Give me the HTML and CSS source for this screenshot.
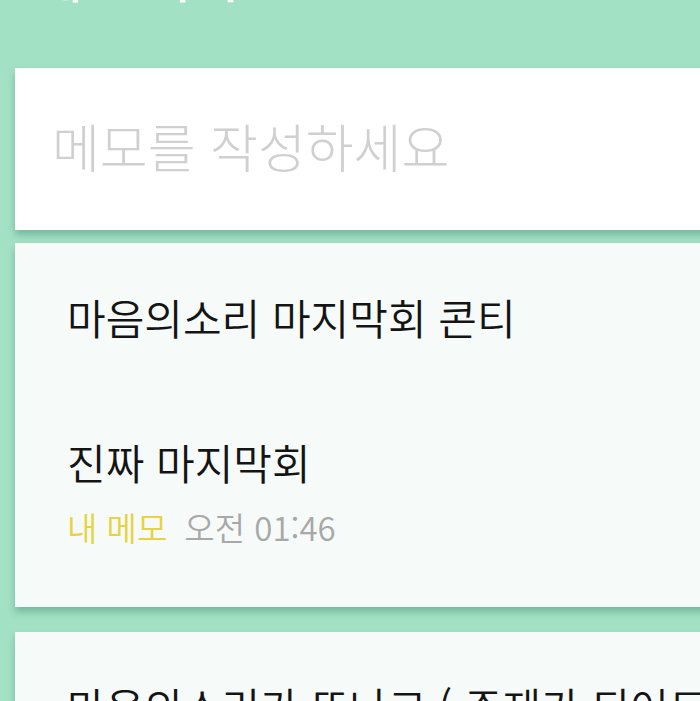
FILE: index.html
```html
<!DOCTYPE html>
<html lang="ko">
<head>
<meta charset="utf-8">
<link rel="stylesheet" href="styles.css">
</head>
<body>
<div class="page">
  <div class="header"><span class="title">메모 목록</span></div>
  <div class="card input-card">
    <div class="placeholder">메모를 작성하세요</div>
  </div>
  <div class="card memo">
    <div class="memo-title">마음의소리 마지막회 콘티</div>
    <div class="memo-body">진짜 마지막회</div>
    <div class="meta"><span class="folder">내 메모</span><span class="time">오전 01:46</span></div>
  </div>
  <div class="card memo next">
    <div class="memo-title">마음의소리가 또나고 ( 주제가 되어드</div>
  </div>
</div>
</body>
</html>
```
FILE: styles.css
```css
html, body {
  margin: 0;
  padding: 0;
}
body {
  background: #a3e1c4;
  font-family: "Noto Sans CJK KR", "Noto Sans", sans-serif;
  overflow: hidden;
  height: 701px;
}
.page {
  padding-left: 15px;
  display: flex;
  flex-direction: column;
}
.header {
  height: 68px;
  overflow: hidden;
  padding-left: 20px;
}
.title {
  display: block;
  color: #ffffff;
  font-size: 52px;
  line-height: 52px;
  margin-top: -50px;
  font-weight: 500;
}
.card {
  margin-right: -30px;
  box-shadow: 0 5px 7px rgba(40, 110, 85, 0.35);
}
.input-card {
  background: #ffffff;
  height: 162px;
  display: flex;
  align-items: center;
  padding-left: 37px;
  box-sizing: border-box;
}
.placeholder {
  color: #d0d0d0;
  font-size: 52px;
  font-weight: 300;
  letter-spacing: 0;
  line-height: 1;
  margin-top: -6px;
}
.memo {
  background: #f6fbf9;
  margin-top: 13px;
  height: 364px;
  box-sizing: border-box;
  padding: 46px 0 0 52px;
}
.memo-title, .memo-body {
  color: #141414;
  font-size: 42px;
  font-weight: 350;
  letter-spacing: 0;
  line-height: 56px;
}
.memo-body {
  margin-top: 89px;
}
.meta {
  margin-top: 17px;
  font-size: 33px;
  font-weight: 350;
  line-height: 40px;
  letter-spacing: 0;
}
.folder {
  color: #e6d340;
  margin-right: 17px;
}
.time {
  color: #a8a8a8;
}
.next {
  margin-top: 25px;
  height: 200px;
  padding-top: 46px;
}
```
